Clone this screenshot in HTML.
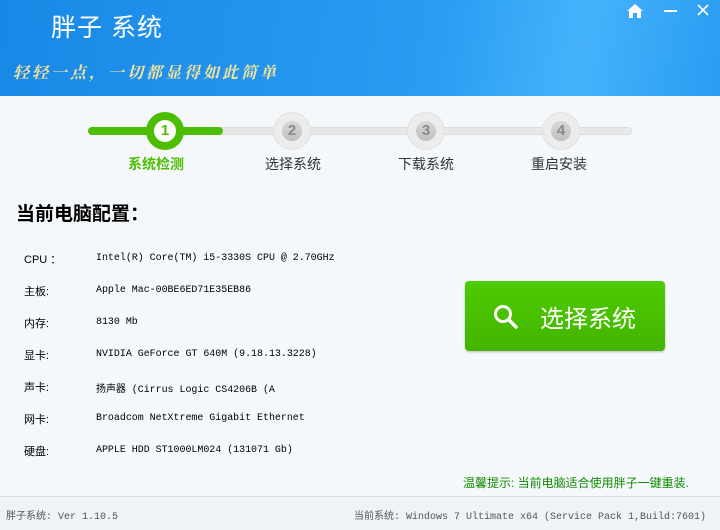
<!DOCTYPE html>
<html><head><meta charset="utf-8"><style>
*{margin:0;padding:0;box-sizing:border-box}
body{width:720px;height:530px;overflow:hidden;background:#f4f8fb;font-family:"Liberation Sans","Noto Sans CJK SC",sans-serif;position:relative}
.hdr{position:absolute;left:0;top:0;width:720px;height:96px;background:linear-gradient(100deg,#1888e6 0%,#2a9cf2 60%,#45b2fb 80%,#2a9cf2 100%)}
.t{position:absolute;left:51px;top:8px;color:#fff;font-size:25px;letter-spacing:1px}
.slog{position:absolute;left:13px;top:60px;color:#f3e39a;font-size:16px;letter-spacing:3px;font-style:italic;font-family:"Noto Serif CJK SC",serif;font-weight:bold}
.ab{position:absolute;color:#fff}
.track{position:absolute;left:88px;top:127px;width:544px;height:8px;background:#e8e8e8;border:1px solid #dcdcdc;border-radius:4px}
.g{position:absolute;left:88px;top:127px;width:135px;height:8px;background:#4cbd00;border-radius:4px}
.c{position:absolute;width:38px;height:38px;border-radius:50%;background:#ececec;border:1px solid #e0e0e0;top:112px}
.c span{position:absolute;left:8px;top:8px;width:20px;height:20px;border-radius:50%;background:linear-gradient(#d8d8d8,#c0c0c0);color:#888;font-size:15px;font-weight:bold;text-align:center;line-height:20px}
.c.a{background:#4cbd00;border-color:#4cbd00}
.c.a span{background:#fff;color:#4cbd00}
.sl{position:absolute;top:154px;font-size:14px;color:#333}
h2{position:absolute;left:16px;top:199px;font-size:19px;font-weight:bold;color:#000}
.r{position:absolute;left:24px;font-size:11px;color:#000}
.v{position:absolute;left:96px;font-family:"Liberation Mono","Noto Sans CJK SC",monospace;font-size:9.95px;color:#000;white-space:nowrap}
.btn{position:absolute;left:465px;top:281px;width:200px;height:70px;border-radius:4px;background:linear-gradient(#4ecb00,#44b400);box-shadow:0 1px 2px #bbb}
.btn b{position:absolute;left:75px;top:18px;color:#fff;font-size:24px;font-weight:normal}
.tip{position:absolute;left:463px;top:474px;color:#138a00;font-size:12px}
.ft{position:absolute;left:0;top:496px;width:720px;height:34px;background:#eef3f7;border-top:1px solid #d6dee5;font-family:"Liberation Mono","Noto Sans CJK SC",monospace;font-size:10px;color:#555;white-space:nowrap}
</style></head><body>
<div class="hdr">
<div class="t">胖子 系统</div>
<div class="slog">轻轻一点，一切都显得如此简单</div>
<svg class="ab" style="left:627px;top:4px" width="16" height="14" viewBox="0 0 16 14"><path d="M8 0L0 7h2v7h4V9h4v5h4V7h2z" fill="#fff"/></svg>
<div class="ab" style="left:664px;top:10px;width:13px;height:2px;background:#fff"></div>
<svg class="ab" style="left:697px;top:4px" width="12" height="12"><path d="M1 1L11 11M11 1L1 11" stroke="#fff" stroke-width="1.6"/></svg>
</div>
<div class="track"></div><div class="g"></div>
<div class="c a" style="left:146px"><span style="left:7px;top:7px;width:22px;height:22px;line-height:22px">1</span></div>
<div class="c" style="left:273px"><span>2</span></div>
<div class="c" style="left:407px"><span>3</span></div>
<div class="c" style="left:542px"><span>4</span></div>
<div class="sl" style="left:128px;color:#4cbd00;font-weight:bold">系统检测</div>
<div class="sl" style="left:265px">选择系统</div>
<div class="sl" style="left:398px">下载系统</div>
<div class="sl" style="left:531px">重启安装</div>
<h2>当前电脑配置：</h2>
<div class="r" style="top:251px">CPU ：</div><div class="v" style="top:252px">Intel(R) Core(TM) i5-3330S CPU @ 2.70GHz</div>
<div class="r" style="top:283px">主板:</div><div class="v" style="top:284px">Apple Mac-00BE6ED71E35EB86</div>
<div class="r" style="top:315px">内存:</div><div class="v" style="top:316px">8130 Mb</div>
<div class="r" style="top:347px">显卡:</div><div class="v" style="top:348px">NVIDIA GeForce GT 640M (9.18.13.3228)</div>
<div class="r" style="top:379px">声卡:</div><div class="v" style="top:380px">扬声器 (Cirrus Logic CS4206B (A</div>
<div class="r" style="top:411px">网卡:</div><div class="v" style="top:412px">Broadcom NetXtreme Gigabit Ethernet</div>
<div class="r" style="top:443px">硬盘:</div><div class="v" style="top:444px">APPLE HDD ST1000LM024 (131071 Gb)</div>
<div class="btn"><svg style="position:absolute;left:27px;top:22px" width="28" height="28"><circle cx="11" cy="11" r="7.5" fill="none" stroke="#fff" stroke-width="3"/><path d="M17 17L24 24" stroke="#fff" stroke-width="3.5" stroke-linecap="round"/></svg><b>选择系统</b></div>
<div class="tip">温馨提示: 当前电脑适合使用胖子一键重装.</div>
<div class="ft"><span style="position:absolute;left:6px;top:10px">胖子系统: Ver 1.10.5</span><span style="position:absolute;left:354px;top:10px">当前系统: Windows 7 Ultimate x64 (Service Pack 1,Build:7601)</span></div>
</body></html>
